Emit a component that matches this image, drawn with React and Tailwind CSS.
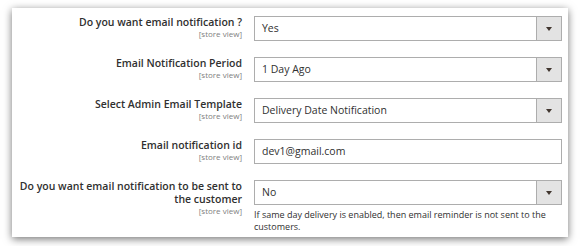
import React from 'react';

const rows = [
  { label: ['Do you want email notification ?'], type: 'select', value: 'Yes' },
  { label: ['Email Notification Period'], type: 'select', value: '1 Day Ago' },
  { label: ['Select Admin Email Template'], type: 'select', value: 'Delivery Date Notification' },
  { label: ['Email notification id'], type: 'input', value: 'dev1@gmail.com' },
  {
    label: ['Do you want email notification to be sent to', 'the customer'],
    type: 'select',
    value: 'No',
    note: 'If same day delivery is enabled, then email reminder is not sent to the customers.',
  },
];

function Field({ type, value }) {
  return (
    <div className="flex h-[25px] w-[308px] border border-[#adadad] bg-white">
      <div className="flex flex-1 items-center pl-[7px] text-[10.5px] text-[#303030]">{value}</div>
      {type === 'select' && (
        <div className="flex w-[25px] items-center justify-center border-l border-[#adadad] bg-[#e3e3e3]">
          <svg width="6" height="4" viewBox="0 0 6 4">
            <path d="M0 0h6L3 4z" fill="#41362f" />
          </svg>
        </div>
      )}
    </div>
  );
}

export default function App() {
  return (
    <div className="h-[246px] w-[582px] bg-white pt-[8px] pl-[12px]" style={{ fontFamily: '"Open Sans", sans-serif' }}>
      <div className="flex h-[229px] w-[556px] flex-col gap-4 bg-white pt-[8px] shadow-[0_2px_8px_rgba(0,0,0,0.55)]">
        {rows.map((row, i) => (
          <div key={i} className="flex">
            <div className="w-[230px] text-right">
              {row.label.map((line) => (
                <div key={line} className="whitespace-nowrap text-[10.5px] font-semibold leading-[13px] text-[#303030]">
                  {line}
                </div>
              ))}
              <div className="text-[8px] leading-[10px] text-[#808080]">[store view]</div>
            </div>
            <div className="ml-3">
              <Field type={row.type} value={row.value} />
              {row.note && (
                <div className="mt-[4px] w-[308px] text-[9px] leading-[12px] text-[#303030]">{row.note}</div>
              )}
            </div>
          </div>
        ))}
      </div>
    </div>
  );
}
